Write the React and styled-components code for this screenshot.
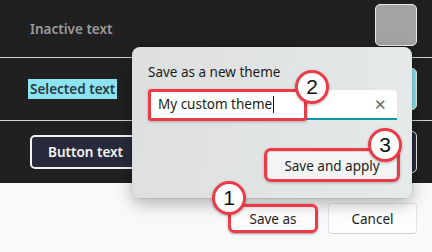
import React from "react";
import styled, { createGlobalStyle } from "styled-components";

const Global = createGlobalStyle`
  html, body { margin: 0; padding: 0; }
  body { width: 432px; height: 252px; overflow: hidden; font-family: "Noto Sans", "Open Sans", sans-serif; }
  #root { width: 432px; height: 252px; }
`;

const Page = styled.div`
  position: relative;
  width: 432px;
  height: 252px;
  display: flex;
  flex-direction: column;
  background: #f9f9fb;
  overflow: hidden;
`;

const Dark = styled.div`
  background: #202020;
  display: flex;
  flex-direction: column;
`;

const Row = styled.div`
  height: ${(p) => p.$h}px;
  display: flex;
  align-items: center;
  justify-content: space-between;
  padding: 0 15px 0 30px;
  border-bottom: ${(p) => (p.$last ? "none" : "1px solid #d2d2d2")};
  box-sizing: border-box;
`;

const Label = styled.span`
  font-size: 13.5px;
  font-weight: 600;
  color: ${(p) => p.$color || "#9b9b9b"};
  background: ${(p) => p.$bg || "transparent"};
  padding: ${(p) => (p.$bg ? "1px 2px" : "0")};
  margin-left: ${(p) => (p.$bg ? "-2px" : "0")};
`;

const Swatch = styled.div`
  width: 42px;
  height: 42px;
  border-radius: 5px;
  background: ${(p) => p.$color};
  border: 1px solid #e8e8e8;
  box-sizing: border-box;
  margin-top: ${(p) => p.$mt || 0}px;
`;

const DarkButton = styled.div`
  height: 34px;
  width: 110px;
  box-sizing: border-box;
  border: 2px solid #f2f2f2;
  border-radius: 5px;
  background: #272a3b;
  color: #f5f5f5;
  font-size: 13.5px;
  font-weight: 600;
  display: flex;
  align-items: center;
  padding-left: 16px;
`;

const Footer = styled.div`
  flex: 1;
  display: flex;
  justify-content: flex-end;
  align-items: flex-start;
  gap: 12px;
  padding: 20px 15px 0 0;
`;

const Button = styled.div`
  height: 31px;
  width: ${(p) => p.$w}px;
  box-sizing: border-box;
  border: 1px solid #e3e3e3;
  border-bottom-color: #d0d0d0;
  border-radius: 4px;
  background: #fdfdfd;
  color: #1b1b1b;
  font-size: 13.5px;
  display: flex;
  align-items: center;
  justify-content: center;
`;

const Dialog = styled.div`
  position: absolute;
  left: 132px;
  top: 47px;
  width: 280px;
  height: 151px;
  box-sizing: border-box;
  border-radius: 8px;
  background: linear-gradient(100deg, #dedfdf 0%, #e2e5e5 60%, #e6eaea 100%);
  box-shadow: 0 6px 16px rgba(0, 0, 0, 0.28), 0 0 0 1px rgba(0, 0, 0, 0.06);
  padding: 15px 15px 0 16px;
  display: flex;
  flex-direction: column;
`;

const Title = styled.div`
  font-size: 13.5px;
  color: #1b1b1b;
  line-height: 20px;
  margin-bottom: 8px;
`;

const Input = styled.div`
  height: 30px;
  box-sizing: border-box;
  background: #ffffff;
  border-radius: 4px 4px 0 0;
  border-bottom: 2px solid #0c9aa6;
  display: flex;
  align-items: center;
  padding: 0 10px 0 10px;
  font-size: 13.5px;
  color: #1b1b1b;
`;

const Caret = styled.span`
  display: inline-block;
  width: 1px;
  height: 17px;
  background: #111;
  margin-left: 1px;
  vertical-align: middle;
`;

const Clear = styled.span`
  margin-left: auto;
  color: #666;
  font-size: 15px;
  line-height: 1;
`;

const ActionRow = styled.div`
  display: flex;
  justify-content: flex-end;
  margin-top: 31px;
`;

const ActionButton = styled(Button)`
  width: 130px;
  height: 29px;
  background: #f3f4f4;
  border-color: #d8d8d8;
`;

const Highlight = styled.div`
  position: absolute;
  left: ${(p) => p.$x}px;
  top: ${(p) => p.$y}px;
  width: ${(p) => p.$w}px;
  height: ${(p) => p.$h}px;
  box-sizing: border-box;
  border: 3px solid #ec3b47;
  border-radius: ${(p) => p.$r || 3}px;
  box-shadow: 0 1px 3px rgba(0, 0, 0, 0.25);
`;

const Badge = styled.div`
  position: absolute;
  left: ${(p) => p.$x - 17}px;
  top: ${(p) => p.$y - 17}px;
  width: 34px;
  height: 34px;
  box-sizing: border-box;
  border-radius: 50%;
  border: 3px solid #ec3b47;
  background: #ffffff;
  box-shadow: 0 1px 3px rgba(0, 0, 0, 0.3);
  display: flex;
  align-items: center;
  justify-content: center;
  font-family: "Liberation Sans", Arial, sans-serif;
  font-size: 21px;
  color: #111;
`;

export default function App() {
  return (
    <Page>
      <Global />
      <Dark>
        <Row $h={58}>
          <Label>Inactive text</Label>
          <Swatch $color="#a3a3a3" $mt={-8} />
        </Row>
        <Row $h={63}>
          <Label $bg="#8ee3f0" $color="#2a3a40">Selected text</Label>
          <Swatch $color="#8ee3f0" />
        </Row>
        <Row $h={62} $last>
          <DarkButton>Button text</DarkButton>
          <Swatch $color="#272a3b" />
        </Row>
      </Dark>
      <Footer>
        <Button $w={86}>Save as</Button>
        <Button $w={89}>Cancel</Button>
      </Footer>
      <Dialog>
        <Title>Save as a new theme</Title>
        <Input>
          <span>My custom theme</span>
          <Caret />
          <Clear>✕</Clear>
        </Input>
        <ActionRow>
          <ActionButton>Save and apply</ActionButton>
        </ActionRow>
      </Dialog>
      <Highlight $x={148} $y={89} $w={159} $h={32} />
      <Badge $x={312} $y={87}>2</Badge>
      <Highlight $x={264} $y={148} $w={136} $h={34} $r={7} />
      <Badge $x={385} $y={145}>3</Badge>
      <Highlight $x={228} $y={204} $w={90} $h={29} $r={6} />
      <Badge $x={229} $y={198}>1</Badge>
    </Page>
  );
}
